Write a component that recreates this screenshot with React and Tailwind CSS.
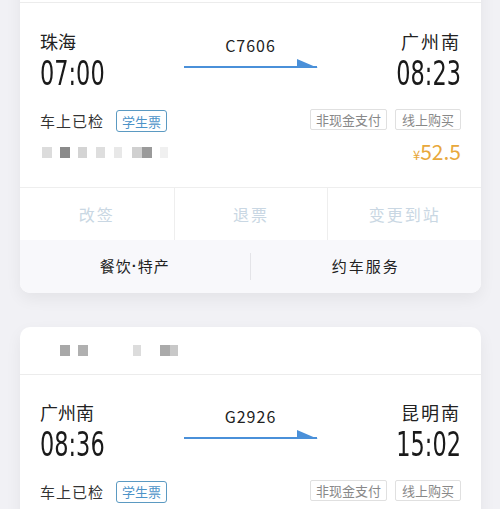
import React from 'react';

const FONT = { fontFamily: '"Noto Sans CJK SC", "Noto Sans", sans-serif' };
const DIGITS = { fontFamily: '"DejaVu Sans", sans-serif' };

const Blur = ({ items }) => (
  <div className="flex items-center">
    {items.map(([ml, w, c], i) => (
      <div key={i} className={`h-[11px] ${ml} ${w} ${c} blur-[0.6px]`}></div>
    ))}
  </div>
);

const Arrow = () => (
  <svg width="134" height="10" viewBox="0 0 134 10" className="block">
    <line x1="0" y1="8" x2="133" y2="8" stroke="#4a90d9" strokeWidth="2" />
    <polygon points="113,0 134,9 113,9" fill="#4a90d9" />
  </svg>
);

const Time = ({ value, right }) => (
  <div className={`mt-[3px] h-[36px] w-[70px] flex ${right ? 'justify-end' : 'justify-start'}`}>
    <span
      className={`inline-block text-[34px] leading-[36px] font-normal text-[#1a1a1a] scale-x-[0.66] ${right ? 'origin-right' : 'origin-left'}`}
      style={DIGITS}
    >
      {value}
    </span>
  </div>
);

const Trip = ({ from, dep, train, to, arr }) => (
  <div className="grid grid-cols-[1fr_auto_1fr] items-start">
    <div>
      <div className="text-[18px] leading-[22px] text-[#222]">{from}</div>
      <Time value={dep} />
    </div>
    <div className="flex flex-col items-center pt-[5px]">
      <div className="text-[16px] leading-[20px] text-[#222] tracking-[1px]">{train}</div>
      <div className="mt-[4px]"><Arrow /></div>
    </div>
    <div className="flex flex-col items-end">
      <div className="text-[18px] leading-[22px] text-[#222] tracking-[2px]">{to}</div>
      <Time value={arr} right />
    </div>
  </div>
);

const Tags = () => (
  <div className="flex items-center justify-between mt-[19px]">
    <div className="flex items-center">
      <span className="text-[15px] text-[#333] tracking-[1px]">车上已检</span>
      <span className="ml-[12px] h-[22px] px-[5px] flex items-center border-[1.5px] border-[#5b9ac2] rounded-[3px] text-[13px] text-[#4c93c8]">学生票</span>
    </div>
    <div className="flex items-center gap-[8px] -mt-[3px]">
      <span className="h-[21px] px-[5px] flex items-center border border-[#e0e0e0] rounded-[2px] text-[13px] text-[#888]">非现金支付</span>
      <span className="h-[21px] px-[6px] flex items-center border border-[#e0e0e0] rounded-[2px] text-[13px] text-[#888]">线上购买</span>
    </div>
  </div>
);

export default function App() {
  return (
    <div className="w-[500px] h-[509px] overflow-hidden bg-[#f1f1f5]" style={FONT}>
      <div className="mx-[20px] w-[461px] -mt-[45px] bg-white rounded-[10px] shadow-[0_6px_16px_rgba(0,0,0,0.06)] overflow-hidden">
        <div className="h-[48px] border-b border-[#ececec]"></div>
        <div className="px-[20px] pt-[27px] pb-[22px]">
          <Trip from="珠海" dep="07:00" train="C7606" to="广州南" arr="08:23" />
          <Tags />
          <div className="flex items-center justify-between mt-[8px]">
            <Blur items={[
              ['ml-[2px]', 'w-[10px]', 'bg-[#dcdcdc]'],
              ['ml-[8px]', 'w-[10px]', 'bg-[#8a8a8a]'],
              ['ml-[8px]', 'w-[9px]', 'bg-[#d4d4d4]'],
              ['ml-[9px]', 'w-[9px]', 'bg-[#dedede]'],
              ['ml-[9px]', 'w-[8px]', 'bg-[#e8e8e8]'],
              ['ml-[10px]', 'w-[10px]', 'bg-[#d0d0d0]'],
              ['ml-[0px]', 'w-[10px]', 'bg-[#9a9a9a]'],
              ['ml-[8px]', 'w-[8px]', 'bg-[#f0f0f0]'],
            ]} />
            <div className="text-[#e8a83c] leading-[20px]">
              <span className="text-[13px]">¥</span>
              <span className="text-[21px]">52.5</span>
            </div>
          </div>
        </div>
        <div className="grid grid-cols-3 h-[53px] border-t border-[#eeeeee]">
          <div className="flex items-center justify-center text-[16px] text-[#c9d7e3] tracking-[2px]">改签</div>
          <div className="flex items-center justify-center text-[16px] text-[#c9d7e3] tracking-[2px] border-l border-[#eeeeee]">退票</div>
          <div className="flex items-center justify-center text-[16px] text-[#c9d7e3] tracking-[2px] border-l border-[#eeeeee]">变更到站</div>
        </div>
        <div className="grid grid-cols-2 h-[53px] bg-[#f8f8fb] items-center">
          <div className="flex items-center justify-center text-[15px] text-[#222] tracking-[1px] h-[27px] border-r border-[#e4e4e8]">
            餐饮<span className="font-bold" style={{ fontFamily: '"Liberation Sans", sans-serif' }}>·</span>特产
          </div>
          <div className="flex items-center justify-center text-[15px] text-[#222] tracking-[2px]">约车服务</div>
        </div>
      </div>

      <div className="mx-[20px] w-[461px] mt-[34px] bg-white rounded-[10px] shadow-[0_6px_16px_rgba(0,0,0,0.06)] overflow-hidden">
        <div className="h-[48px] border-b border-[#ececec] flex items-center pl-[40px]">
          <Blur items={[
            ['ml-[0px]', 'w-[10px]', 'bg-[#a8a8a8]'],
            ['ml-[8px]', 'w-[10px]', 'bg-[#b0b0b0]'],
            ['ml-[45px]', 'w-[8px]', 'bg-[#dcdcdc]'],
            ['ml-[19px]', 'w-[10px]', 'bg-[#aaaaaa]'],
            ['ml-[0px]', 'w-[8px]', 'bg-[#c8c8c8]'],
          ]} />
        </div>
        <div className="px-[20px] pt-[26px] pb-[24px]">
          <Trip from="广州南" dep="08:36" train="G2926" to="昆明南" arr="15:02" />
          <Tags />
        </div>
      </div>
    </div>
  );
}
